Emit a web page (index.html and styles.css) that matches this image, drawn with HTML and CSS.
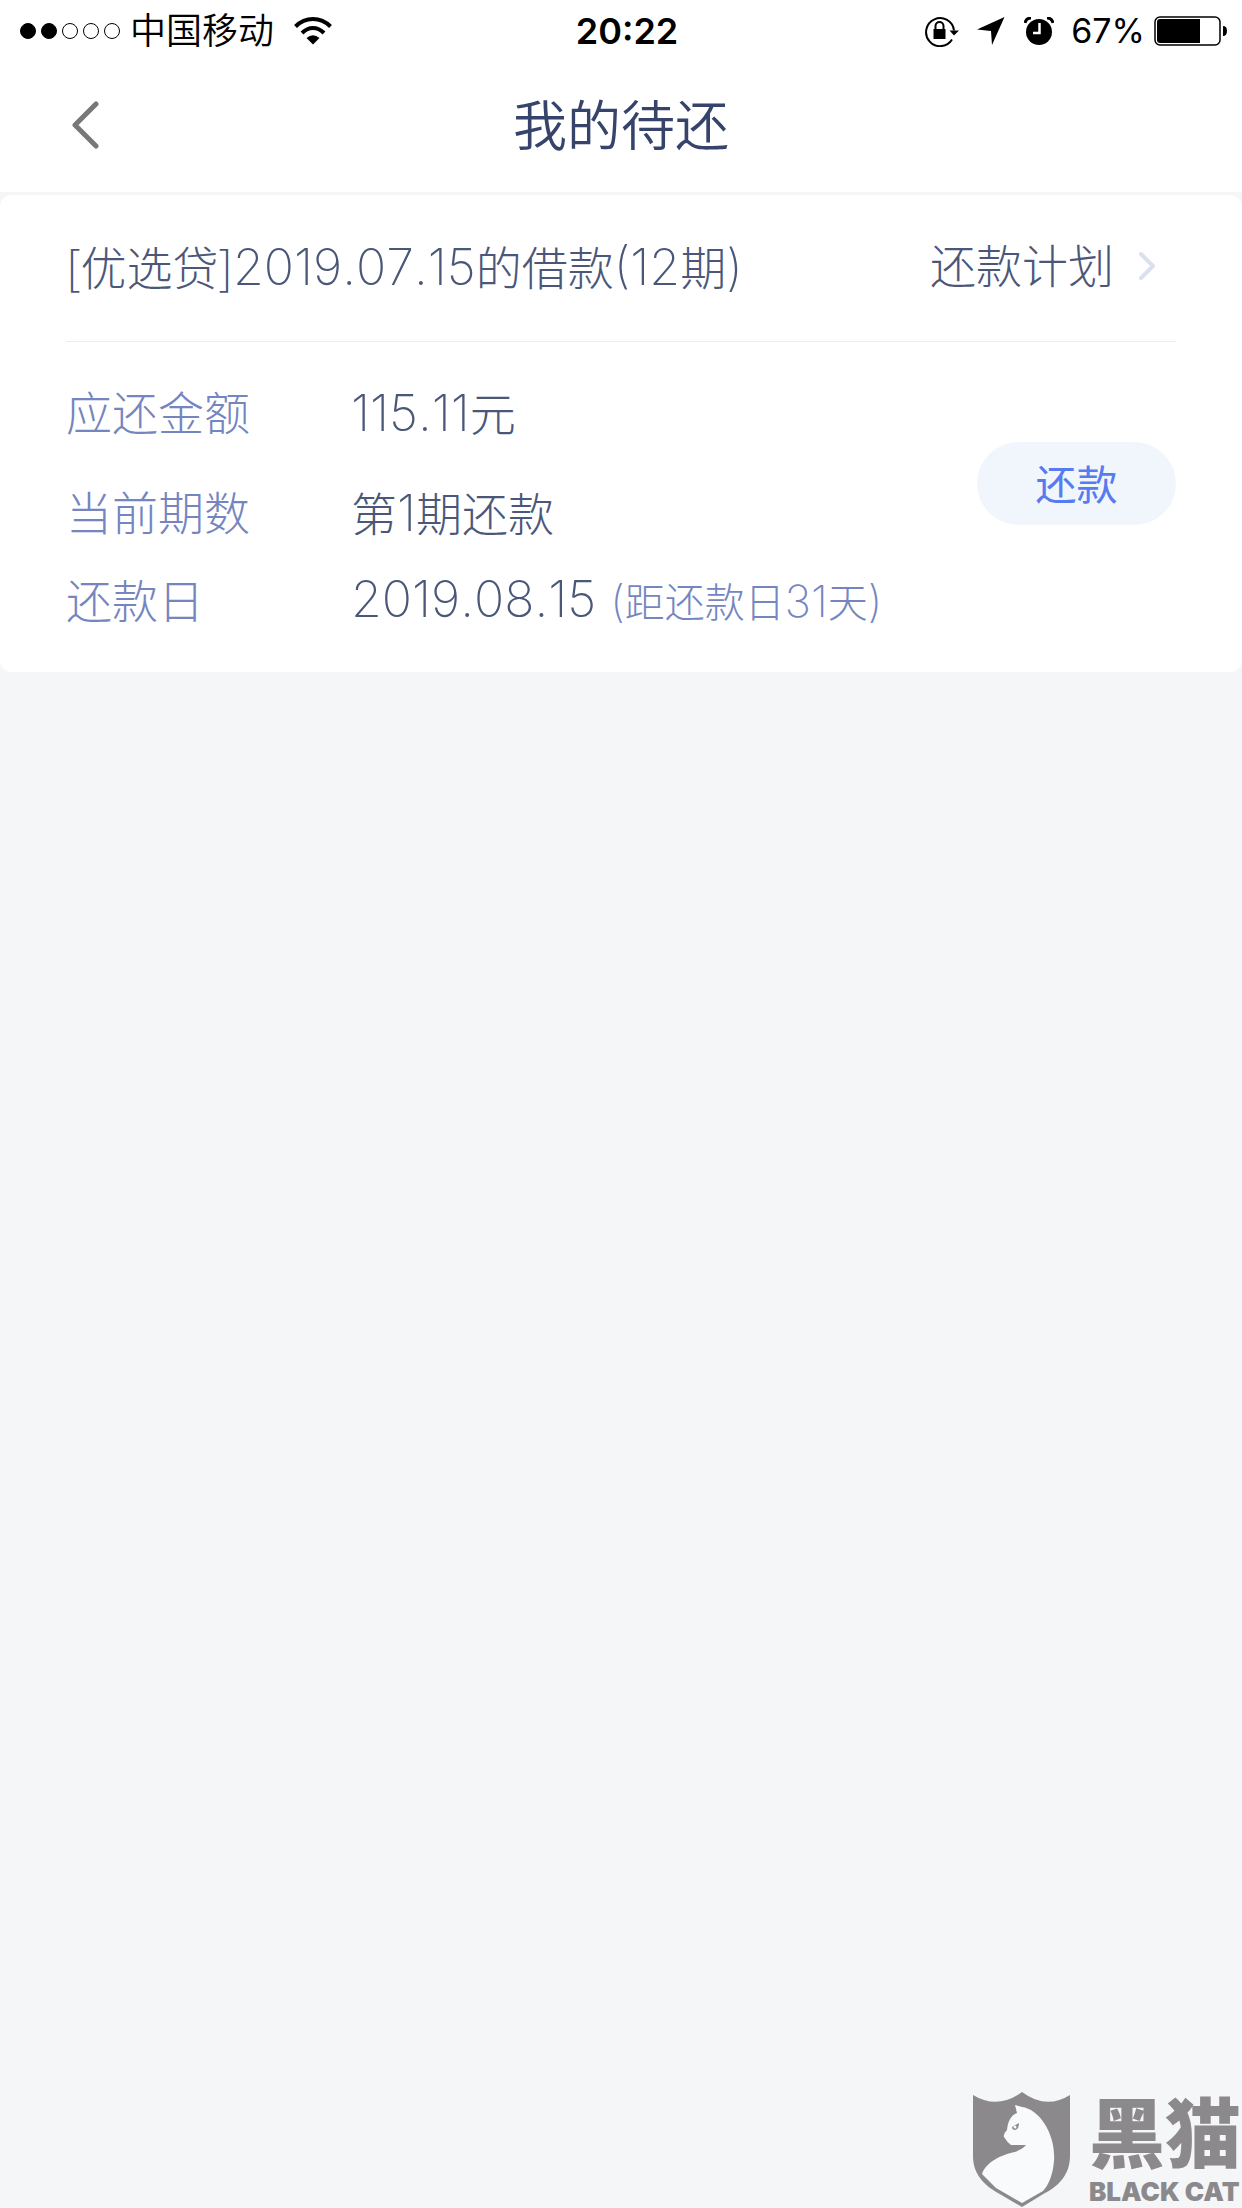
FILE: index.html
```html
<!DOCTYPE html>
<html lang="zh-CN">
<head>
<meta charset="utf-8">
<meta name="viewport" content="width=device-width, initial-scale=1">
<title>我的待还</title>
<link rel="stylesheet" href="styles.css">
</head>
<body>
<div class="status">
  <div class="status-left">
    <div class="signal"><i class="dot full"></i><i class="dot full"></i><i class="dot"></i><i class="dot"></i><i class="dot"></i></div>
    <span class="carrier">中国移动</span>
    <svg class="wifi" width="38" height="28" viewBox="0 0 38 28" fill="none" stroke="#000" stroke-width="4">
      <path d="M1.5 9.5Q9 2 19 2T36.500 9.500"/>
      <path d="M8 16Q13 11 19 11T30 16"/>
      <path d="M12.500 21Q19 15.500 25.500 21L19 27.500Z" fill="#000" stroke="none"/>
    </svg>
  </div>
  <time class="clock">20:22</time>
  <div class="status-right">
    <svg width="36" height="32" viewBox="0 0 36 32" fill="none" stroke="#000" stroke-width="2">
      <path d="M28 24.500A14 14 0 1 1 30 15.500"/>
      <path d="M25.500 15.500H35L30 20.500Z" fill="#000" stroke="none"/>
      <path d="M9.500 14H21.500V24H9.500Z" fill="#000" stroke="none"/>
      <path d="M11.500 14V11A4 4 0 0 1 19.500 11V14"/>
    </svg>
    <svg class="locate" width="28" height="28" viewBox="0 0 28 28"><path d="M27.500 0L15 28L14 14L0 12.500Z"/></svg>
    <svg class="alarm" width="30" height="28" viewBox="0 0 30 28">
      <circle cx="15" cy="15" r="13"/>
      <path d="M1 6Q2 1 7 1M23 1Q28 1 29 6" fill="none" stroke="#000" stroke-width="3"/>
      <path d="M15.500 6V16H9" fill="none" stroke="#fff" stroke-width="2.500"/>
    </svg>
    <span class="percent">67%</span>
    <svg width="74" height="30" viewBox="0 0 74 30">
      <rect x="1" y="1" width="65" height="28" rx="5" fill="none" stroke="#000" stroke-width="1.500"/>
      <path d="M6 3H46V27H6Q3 27 3 24V6Q3 3 6 3Z"/>
      <path d="M69 10Q73 10 73 15T69 20Z"/>
    </svg>
  </div>
</div>
<header class="nav">
  <button class="back" type="button" aria-label="返回">
    <svg width="28" height="48" viewBox="0 0 28 48"><path d="M24 3L3 24L24 45" fill="none" stroke="#77787a" stroke-width="5" stroke-linecap="round" stroke-linejoin="round"/></svg>
  </button>
  <h1 class="title">我的待还</h1>
</header>
<main class="card">
  <div class="card-head">
    <h2 class="loan"><span class="product">[优选贷]</span><span class="num">2019.07.15</span>的借款<span class="num">(12</span>期<span class="num">)</span></h2>
    <a class="plan" href="#">还款计划
      <svg width="18" height="30" viewBox="0 0 18 30"><path d="M3 3L15 15L3 27" fill="none" stroke="#dae0ee" stroke-width="4" stroke-linecap="round" stroke-linejoin="round"/></svg>
    </a>
  </div>
  <div class="card-body">
    <dl class="facts">
      <dt>应还金额</dt><dd><span class="num">115.11</span>元</dd>
      <dt>当前期数</dt><dd>第<span class="num">1</span>期还款</dd>
      <dt>还款日</dt><dd><span class="num">2019.08.15</span><span class="note"><span class="note-num">(</span>距还款日<span class="note-num">31</span>天<span class="note-num">)</span></span></dd>
    </dl>
    <button class="pay" type="button">还款</button>
  </div>
</main>
<div class="watermark">
  <svg width="98" height="116" viewBox="0 0 98 116">
    <path fill="#8c898c" d="M0 3Q25 18 49 0Q73 18 97 3V64C97 82 86 94 72 101L49 115L25 101C11 93 0 82 0 64Z"/>
    <path fill="#f8fafc" d="M42 13L49 15C66 17 83 42 81 69C80 83 75 94 70 99L49 111L23 96L9 82C13 70 28 63 42 60Q50 57 53 53H38Q34 50 31 45Q30 42 34 38C35 29 38 23 44 21Z"/>
    <path fill="#8c898c" d="M39 35L46 31Q46 37 42 38Q39 38 39 35Z"/>
    <circle cx="42" cy="35" r="1.500" fill="#f8fafc"/>
  </svg>
  <div class="brand"><span class="brand-cn">黑猫</span><span class="brand-en">BLACK CAT</span></div>
</div>
</body>
</html>
```
FILE: styles.css
```css
* { box-sizing: border-box; }
body {
  margin: 0;
  min-height: 100vh;
  background: #f4f6f8;
  color: #4b5779;
  font-family: Inter, "Noto Sans CJK SC", sans-serif;
  font-weight: 300;
}
h1, h2, dl, dd { margin: 0; font-weight: inherit; }
button { border: 0; padding: 0; font-family: inherit; cursor: pointer; }
svg { display: block; flex: none; }

.status {
  display: grid;
  grid-template-columns: 1fr auto 1fr;
  align-items: center;
  height: 62px;
  padding: 0 14px 0 20px;
  background: #fff;
  color: #000;
  font-size: 36px;
  line-height: 48px;
}
.status-left, .status-right, .signal { display: flex; align-items: center; }
.signal { gap: 5px; }
.dot { width: 16px; height: 16px; border: 1px solid #000; border-radius: 50%; }
.dot.full { background: #000; }
.carrier { margin: 0 20px 0 10px; font-weight: 350; }
.clock { padding-left: 6px; font-weight: 600; }
.status-right { justify-content: flex-end; }
.locate { margin: 0 19px 0 17px; }
.percent { margin: 0 9px 0 17px; font-weight: 400; font-size: 34px; }

.nav {
  display: grid;
  grid-template-columns: 1fr auto 1fr;
  align-items: center;
  height: 130px;
  padding: 0 72px;
  background: #fff;
}
.back { justify-self: start; padding-bottom: 4px; background: none; }
.title { color: #36446b; font-size: 54px; line-height: 80px; font-weight: 350; }

.card {
  margin-top: 3px;
  padding: 0 66px 33px;
  background: #fff;
  border-radius: 12px;
  font-size: 46px;
  line-height: 60px;
  font-weight: 300;
}
.card-head {
  display: flex;
  justify-content: space-between;
  align-items: center;
  height: 147px;
  padding-bottom: 4px;
  border-bottom: 1px solid #ececee;
}
.loan { font-size: 46px; }
.product { font-family: "Noto Sans CJK SC", sans-serif; }
.num { font-size: 50px; font-weight: 200; font-kerning: none; }
.plan { display: flex; align-items: center; gap: 24px; margin-right: 20px; color: inherit; text-decoration: none; }
.card-body { display: flex; justify-content: space-between; align-items: flex-start; padding-top: 21px; }
.facts { display: grid; grid-template-columns: 285px auto; grid-template-rows: 100px 100px 76px; align-items: center; }
.facts dt { color: #7585bf; }
.note { margin-left: 14px; color: #7585bf; font-size: 40px; }
.note-num { font-size: 44px; font-weight: 200; }
.pay {
  margin-top: 79px;
  width: 199px;
  height: 83px;
  padding-bottom: 4px;
  border-radius: 42px;
  background: #f1f6fd;
  color: #567cf0;
  font-size: 41px;
  font-weight: 400;
}

.watermark {
  position: absolute;
  right: 1px;
  bottom: 0;
  display: flex;
  gap: 18px;
  align-items: flex-end;
  color: #8c898c;
}
.brand { display: flex; flex-direction: column; gap: 4px; }
.brand-cn { font-size: 76px; line-height: 76px; font-weight: 900; }
.brand-en { font-size: 26px; line-height: 32px; font-weight: 900; }
```
